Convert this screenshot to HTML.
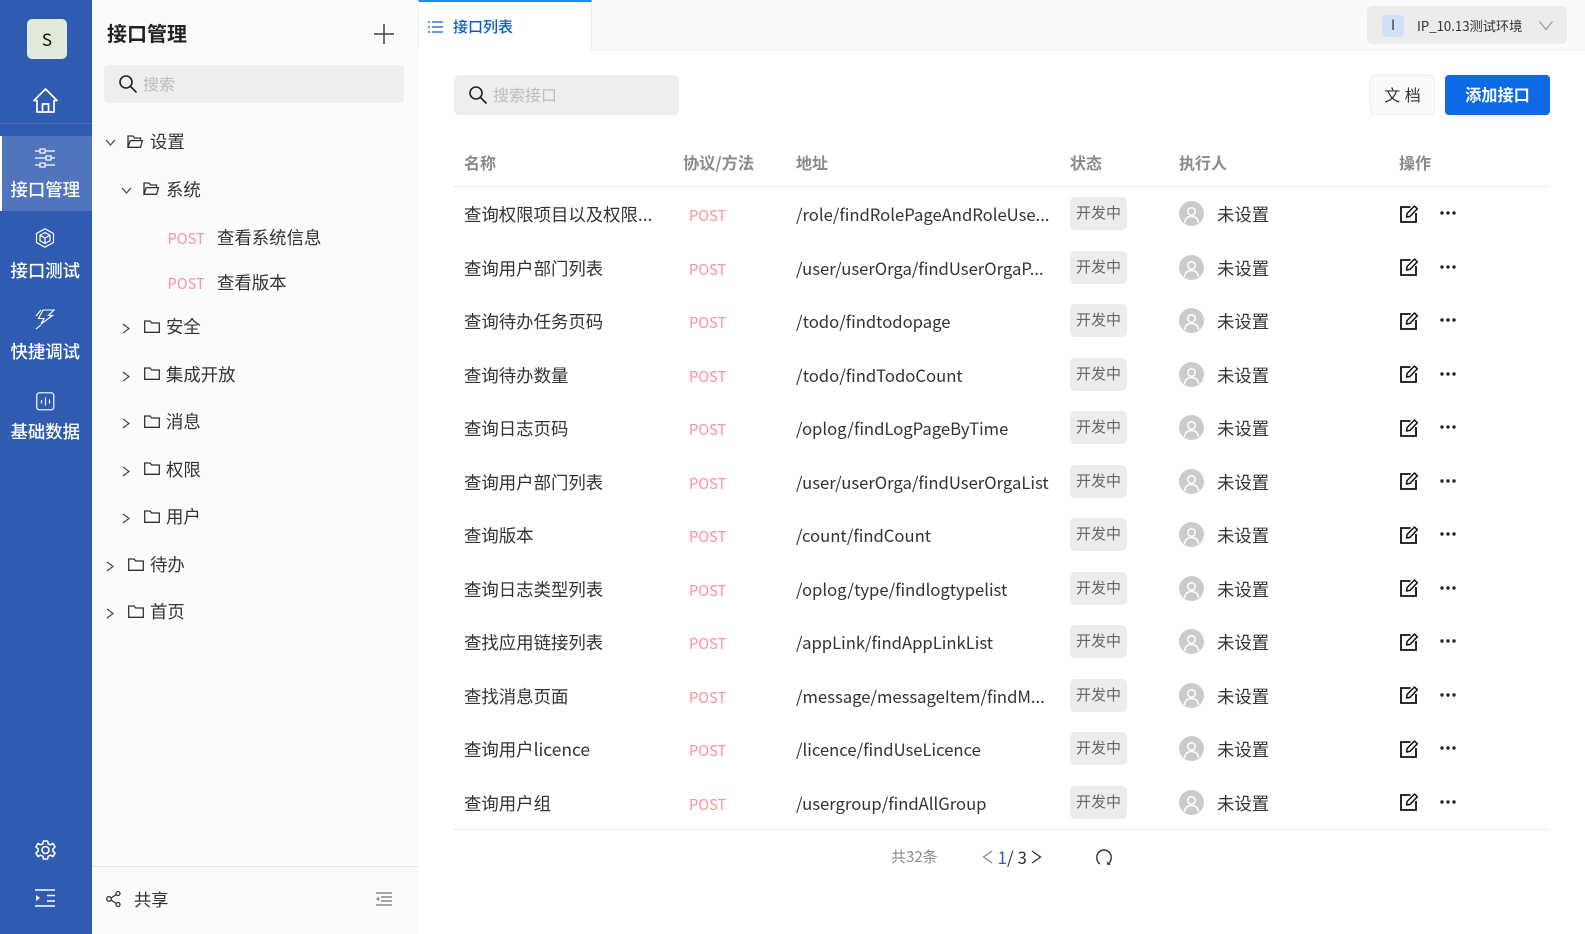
<!DOCTYPE html>
<html lang="zh-CN"><head><meta charset="utf-8"><title>接口管理</title>
<style>
*{box-sizing:border-box}
html,body{margin:0;padding:0;width:1585px;height:934px;overflow:hidden;background:#fff;font-family:"Noto Sans CJK SC","Liberation Sans",sans-serif;color:#333}
.a{position:absolute}
.t{position:absolute;white-space:nowrap;line-height:24px;font-size:17.4px}
svg{position:absolute;overflow:visible;fill:none}
.nav{left:0;width:90.5px;text-align:center;color:#fff;font-size:17.4px;font-weight:500}
.ar{stroke:#444;stroke-width:1.2}
.fo{stroke:#333;stroke-width:1.3}
.th{top:150px;font-size:16px;font-weight:700;color:#8a8a8a}
.r{position:absolute;left:454px;width:1096px;height:53.5px}
.r .t{top:16px}
.r .n{left:10px}.r .p{left:235px;top:17px;color:#ff9198;font-size:14.6px}.r .u{left:342px;top:15px;font-size:16.65px}
.g{position:absolute;left:616px;top:10px;width:57px;height:33px;background:#ececec;border-radius:5px;text-align:center;font-size:15px;line-height:32px;color:#666}
.av{position:absolute;left:725px;top:14px;width:25px;height:25px}
.r .e{left:763px}
.ed{position:absolute;left:945.5px;top:17.5px;width:18px;height:18px}
.dt{position:absolute;left:986px;top:24px;width:16px;height:4px}
</style></head><body>
<svg width="0" height="0" style="position:absolute"><defs>
<g id="cr"><path d="M1 1l4.5 5 4.5-5" class="ar"/></g>
<g id="ca"><path d="M1 1l6 4.5-6 4.5" class="ar"/></g>
<g id="fc"><path d="M.7 1h5.4l1.5 2h7.7v9.3H.7z" class="fo"/></g>
<g id="fp"><path d="M1 12.3V1h5l1.5 2h6v2.6M1 12.3h12.5l2-6.7H3.2L1 12.3z" class="fo"/></g>
<g id="av"><circle cx="12.5" cy="12.5" r="12.5" fill="#cbcbcb"/><circle cx="12.5" cy="10.5" r="3.8" stroke="#fff" stroke-width="1.5"/><path d="M5.5 22c.5-4.5 3-6.5 7-6.5s6.500 2 7 6.500" stroke="#fff" stroke-width="1.6"/></g>
<g id="ed"><path d="M10.500 2H1v15h15V8" stroke="#111" stroke-width="1.800"/><path d="M6.500 12l.6-3.500L14.500 1l2.800 2.800L10 11.400z" stroke="#111" stroke-width="1.500" stroke-linejoin="round"/></g>
<g id="dt"><circle cx="2" cy="2" r="1.700" fill="#222"/><circle cx="8" cy="2" r="1.700" fill="#222"/><circle cx="14" cy="2" r="1.700" fill="#222"/></g>
</defs></svg>

<!-- left nav -->
<div class="a" style="left:0;top:0;width:92px;height:934px;background:#2f5cb0"></div>
<div class="a" style="left:27px;top:19px;width:40px;height:40px;background:#e0ecd9;border-radius:5px;text-align:center;font-size:17px;line-height:40px;color:#111">S</div>
<svg style="left:33px;top:88px" width="25" height="25" stroke="#fff" stroke-width="1.700"><path d="M12.500 1L1 12.500h3V24h17V12.500h3z" stroke-linejoin="round"/><path d="M9.500 24v-8h6v8"/></svg>
<div class="a" style="left:0;top:123px;width:92px;height:1px;background:#4a72bb"></div>
<div class="a" style="left:0;top:136px;width:92px;height:75px;background:#5075bd;border-left:2px solid #fff"></div>
<svg style="left:35px;top:148px" width="20" height="20" stroke="#fff" stroke-width="1.200"><path d="M0 3h5M10 3h10M0 10h11M16 10h4M0 17h5M10 17h10"/><rect x="5" y="1" width="5" height="4"/><rect x="11" y="8" width="5" height="4"/><rect x="5" y="15" width="5" height="4"/></svg>
<div class="t nav" style="top:178px">接口管理</div>
<svg style="left:35px;top:228px" width="20" height="20" stroke="#fff" stroke-width="1.200"><path d="M10 .8l8.500 4.700v9L10 19.200 1.500 14.500v-9z"/><path d="M10 4.500l5 2.700v5.600l-5 2.700-5-2.700V7.200zM5 7.200l5 2.800 5-2.800M10 10v5.500"/></svg>
<div class="t nav" style="top:259px">接口测试</div>
<svg style="left:35px;top:309px" width="20" height="21" stroke="#fff" stroke-width="1.100"><path d="M8 1h11l-5.500 5.500h4L6 15l3-5.500H3.500zM1 20l5-4M6 1L1 7"/></svg>
<div class="t nav" style="top:340px">快捷调试</div>
<svg style="left:36px;top:392px" width="19" height="19" stroke="#fff" stroke-width="1.200"><rect x=".8" y=".8" width="17" height="17" rx="2.500"/><path d="M5.500 8v3.500M9.500 5.500v8M13.500 7.500v4"/></svg>
<div class="t nav" style="top:420px">基础数据</div>
<svg style="left:35px;top:840px" width="21" height="21" stroke="#fff" stroke-width="1.600"><path d="M8.500 1h4l.7 2.800 2.200 1 2.600-1.300 2 3.400-2.100 2v2.200l2.100 2-2 3.400-2.600-1.300-2.200 1-.7 2.800h-4l-.7-2.800-2.200-1-2.600 1.300-2-3.400 2.100-2V8.900l-2.100-2 2-3.400 2.600 1.300 2.200-1z" stroke-linejoin="round"/><circle cx="10.500" cy="10" r="3.500"/></svg>
<svg style="left:35px;top:889px" width="20" height="18" stroke="#fff" stroke-width="1.600"><path d="M0 1h20M12 6.500h8M12 12h8M0 17h20"/><path d="M1 6v6l4-3z" fill="#fff" stroke="none"/></svg>

<!-- panel -->
<div class="a" style="left:92px;top:0;width:326px;height:934px;background:#fafbfd"></div>
<div class="t" style="left:107px;top:20px;font-size:20px;font-weight:700;line-height:26px;color:#222">接口管理</div>
<svg style="left:374px;top:24px" width="20" height="20" stroke="#444" stroke-width="1.500"><path d="M0 10h20M10 0v20"/></svg>
<div class="a" style="left:104px;top:65px;width:300px;height:38px;background:#eee;border-radius:4px"></div>
<svg style="left:119px;top:75px" width="18" height="18" stroke="#222" stroke-width="1.600"><circle cx="7" cy="7" r="6"/><path d="M11.500 11.500l6 6"/></svg>
<div class="t" style="left:143px;top:71px;font-size:16px;color:#bdbdbd">搜索</div>

<svg style="left:105px;top:139px" width="11" height="8"><use href="#cr"/></svg>
<svg style="left:127px;top:135px" width="17" height="14"><use href="#fp"/></svg>
<div class="t" style="left:150px;top:130px">设置</div>
<svg style="left:121px;top:187px" width="11" height="8"><use href="#cr"/></svg>
<svg style="left:143px;top:182px" width="17" height="14"><use href="#fp"/></svg>
<div class="t" style="left:166px;top:178px">系统</div>
<div class="t" style="left:167.5px;top:227px;font-size:14.6px;color:#ff9198">POST</div>
<div class="t" style="left:217px;top:226px">查看系统信息</div>
<div class="t" style="left:167.5px;top:272px;font-size:14.6px;color:#ff9198">POST</div>
<div class="t" style="left:217px;top:271px">查看版本</div>

<svg style="left:122px;top:323px" width="9" height="12"><use href="#ca"/></svg><svg style="left:144px;top:320px" width="16" height="14"><use href="#fc"/></svg><div class="t" style="left:166px;top:315px">安全</div>
<svg style="left:122px;top:371px" width="9" height="12"><use href="#ca"/></svg><svg style="left:144px;top:367px" width="16" height="14"><use href="#fc"/></svg><div class="t" style="left:166px;top:363px">集成开放</div>
<svg style="left:122px;top:418px" width="9" height="12"><use href="#ca"/></svg><svg style="left:144px;top:415px" width="16" height="14"><use href="#fc"/></svg><div class="t" style="left:166px;top:410px">消息</div>
<svg style="left:122px;top:466px" width="9" height="12"><use href="#ca"/></svg><svg style="left:144px;top:462px" width="16" height="14"><use href="#fc"/></svg><div class="t" style="left:166px;top:458px">权限</div>
<svg style="left:122px;top:513px" width="9" height="12"><use href="#ca"/></svg><svg style="left:144px;top:510px" width="16" height="14"><use href="#fc"/></svg><div class="t" style="left:166px;top:505px">用户</div>
<svg style="left:106px;top:561px" width="9" height="12"><use href="#ca"/></svg><svg style="left:128px;top:558px" width="16" height="14"><use href="#fc"/></svg><div class="t" style="left:150px;top:553px">待办</div>
<svg style="left:106px;top:608px" width="9" height="12"><use href="#ca"/></svg><svg style="left:128px;top:605px" width="16" height="14"><use href="#fc"/></svg><div class="t" style="left:150px;top:600px">首页</div>

<div class="a" style="left:92px;top:866px;width:326px;height:1px;background:#e4e5e8"></div>
<svg style="left:106px;top:891px" width="15" height="16" stroke="#333" stroke-width="1.300"><circle cx="3" cy="8" r="2.300"/><circle cx="12" cy="2.500" r="2"/><circle cx="12" cy="13.500" r="2"/><path d="M5 7l5.300-3.500M5 9l5.300 3.500"/></svg>
<div class="t" style="left:134px;top:887px;color:#333;font-size:17.2px">共享</div>
<svg style="left:376px;top:892px" width="16" height="14" stroke="#888" stroke-width="1.500"><path d="M0 1h16M5 5h11M5 9h11M0 13h16"/><path d="M3 4.500v5L0 7z" fill="#888" stroke="none"/></svg>

<!-- tab bar -->
<div class="a" style="left:418px;top:0;width:1167px;height:50px;background:#fafafa;border-bottom:1px solid #eee"></div>
<div class="a" style="left:418px;top:0;width:174px;height:50px;background:#fff;border-top:2px solid #1890ff;border-right:1px solid #e8e8e8;border-left:1px solid #f0f0f0"></div>
<svg style="left:428px;top:21px" width="15" height="12" stroke="#0d5bc9" stroke-width="1.200"><path d="M4 1h11M4 6h11M4 11h11M0 1h2M0 6h2M0 11h2"/></svg>
<div class="t" style="left:453px;top:15px;font-size:15px;font-weight:500;color:#0d5bc9">接口列表</div>
<div class="a" style="left:1367px;top:6px;width:200px;height:38px;background:#ececec;border-radius:5px"></div>
<div class="a" style="left:1382px;top:15px;width:22px;height:22px;background:#cfe0f7;border-radius:4px;text-align:center;font-size:14px;line-height:21px;color:#333">I</div>
<div class="t" style="left:1417px;top:14px;font-size:13.2px;color:#333">IP_10.13测试环境</div>
<svg style="left:1539px;top:21px" width="14" height="9" stroke="#999" stroke-width="1.200"><path d="M.5.500L7 8.500 13.500.5"/></svg>

<!-- toolbar -->
<div class="a" style="left:454px;top:75px;width:225px;height:40px;background:#eee;border-radius:5px"></div>
<svg style="left:469px;top:86px" width="18" height="18" stroke="#222" stroke-width="1.600"><circle cx="7" cy="7" r="6"/><path d="M11.500 11.500l6 6"/></svg>
<div class="t" style="left:493px;top:82px;font-size:16px;color:#bdbdbd">搜索接口</div>
<div class="a" style="left:1370px;top:75px;width:65px;height:40px;background:#fafafa;border:1px solid #eee;border-radius:4px;text-align:center;font-size:16px;line-height:37px;color:#333;word-spacing:1px">文 档</div>
<div class="a" style="left:1445px;top:75px;width:105px;height:40px;background:#0d6ae6;border-radius:4px;text-align:center;font-size:16.2px;font-weight:700;line-height:39px;color:#fff">添加接口</div>

<!-- table head -->
<div class="t th" style="left:464px">名称</div>
<div class="t th" style="left:683px;font-size:16.2px">协议/方法</div>
<div class="t th" style="left:796px">地址</div>
<div class="t th" style="left:1070px">状态</div>
<div class="t th" style="left:1179px">执行人</div>
<div class="t th" style="left:1399px">操作</div>
<div class="a" style="left:454px;top:186px;width:1096px;height:1px;background:#e9e9e9"></div>

<div class="r" style="top:187px"><div class="t n">查询权限项目以及权限...</div><div class="t p">POST</div><div class="t u">/role/findRolePageAndRoleUse...</div><div class="g">开发中</div><svg class="av"><use href="#av"/></svg><div class="t e">未设置</div><svg class="ed"><use href="#ed"/></svg><svg class="dt"><use href="#dt"/></svg></div>
<div class="r" style="top:240.500px"><div class="t n">查询用户部门列表</div><div class="t p">POST</div><div class="t u">/user/userOrga/findUserOrgaP...</div><div class="g">开发中</div><svg class="av"><use href="#av"/></svg><div class="t e">未设置</div><svg class="ed"><use href="#ed"/></svg><svg class="dt"><use href="#dt"/></svg></div>
<div class="r" style="top:294px"><div class="t n">查询待办任务页码</div><div class="t p">POST</div><div class="t u">/todo/findtodopage</div><div class="g">开发中</div><svg class="av"><use href="#av"/></svg><div class="t e">未设置</div><svg class="ed"><use href="#ed"/></svg><svg class="dt"><use href="#dt"/></svg></div>
<div class="r" style="top:347.500px"><div class="t n">查询待办数量</div><div class="t p">POST</div><div class="t u">/todo/findTodoCount</div><div class="g">开发中</div><svg class="av"><use href="#av"/></svg><div class="t e">未设置</div><svg class="ed"><use href="#ed"/></svg><svg class="dt"><use href="#dt"/></svg></div>
<div class="r" style="top:401px"><div class="t n">查询日志页码</div><div class="t p">POST</div><div class="t u">/oplog/findLogPageByTime</div><div class="g">开发中</div><svg class="av"><use href="#av"/></svg><div class="t e">未设置</div><svg class="ed"><use href="#ed"/></svg><svg class="dt"><use href="#dt"/></svg></div>
<div class="r" style="top:454.500px"><div class="t n">查询用户部门列表</div><div class="t p">POST</div><div class="t u">/user/userOrga/findUserOrgaList</div><div class="g">开发中</div><svg class="av"><use href="#av"/></svg><div class="t e">未设置</div><svg class="ed"><use href="#ed"/></svg><svg class="dt"><use href="#dt"/></svg></div>
<div class="r" style="top:508px"><div class="t n">查询版本</div><div class="t p">POST</div><div class="t u">/count/findCount</div><div class="g">开发中</div><svg class="av"><use href="#av"/></svg><div class="t e">未设置</div><svg class="ed"><use href="#ed"/></svg><svg class="dt"><use href="#dt"/></svg></div>
<div class="r" style="top:561.500px"><div class="t n">查询日志类型列表</div><div class="t p">POST</div><div class="t u">/oplog/type/findlogtypelist</div><div class="g">开发中</div><svg class="av"><use href="#av"/></svg><div class="t e">未设置</div><svg class="ed"><use href="#ed"/></svg><svg class="dt"><use href="#dt"/></svg></div>
<div class="r" style="top:615px"><div class="t n">查找应用链接列表</div><div class="t p">POST</div><div class="t u">/appLink/findAppLinkList</div><div class="g">开发中</div><svg class="av"><use href="#av"/></svg><div class="t e">未设置</div><svg class="ed"><use href="#ed"/></svg><svg class="dt"><use href="#dt"/></svg></div>
<div class="r" style="top:668.500px"><div class="t n">查找消息页面</div><div class="t p">POST</div><div class="t u">/message/messageItem/findM...</div><div class="g">开发中</div><svg class="av"><use href="#av"/></svg><div class="t e">未设置</div><svg class="ed"><use href="#ed"/></svg><svg class="dt"><use href="#dt"/></svg></div>
<div class="r" style="top:722px"><div class="t n">查询用户licence</div><div class="t p">POST</div><div class="t u">/licence/findUseLicence</div><div class="g">开发中</div><svg class="av"><use href="#av"/></svg><div class="t e">未设置</div><svg class="ed"><use href="#ed"/></svg><svg class="dt"><use href="#dt"/></svg></div>
<div class="r" style="top:775.500px"><div class="t n">查询用户组</div><div class="t p">POST</div><div class="t u">/usergroup/findAllGroup</div><div class="g">开发中</div><svg class="av"><use href="#av"/></svg><div class="t e">未设置</div><svg class="ed"><use href="#ed"/></svg><svg class="dt"><use href="#dt"/></svg></div>
<div class="a" style="left:454px;top:829px;width:1096px;height:1px;background:#e9e9e9"></div>

<!-- pagination -->
<div class="t" style="left:891px;top:845px;font-size:15px;color:#8a8a8a">共32条</div>
<svg style="left:982px;top:850px" width="11" height="14" stroke="#888" stroke-width="1.300"><path d="M10 1L1.500 7l8.500 6"/></svg>
<div class="t" style="left:997.5px;top:845px;font-size:17px;color:#2a5cc0">1</div>
<div class="t" style="left:1007px;top:845px;font-size:17px;color:#333">/ 3</div>
<svg style="left:1031px;top:850px" width="11" height="14" stroke="#333" stroke-width="1.300"><path d="M1 1l8.500 6L1 13"/></svg>
<svg style="left:1096px;top:849px" width="16" height="17" stroke="#333" stroke-width="1.400"><path d="M4 15C1.800 13.500.8 11.500.8 8.700.8 4.500 3.800 1 8 1s7.200 3.500 7.200 7.700c0 2.800-1 4.800-3.200 6.300"/><path d="M11 12.500l1 3 2.500-.5" stroke-width="1"/></svg>
</body></html>
